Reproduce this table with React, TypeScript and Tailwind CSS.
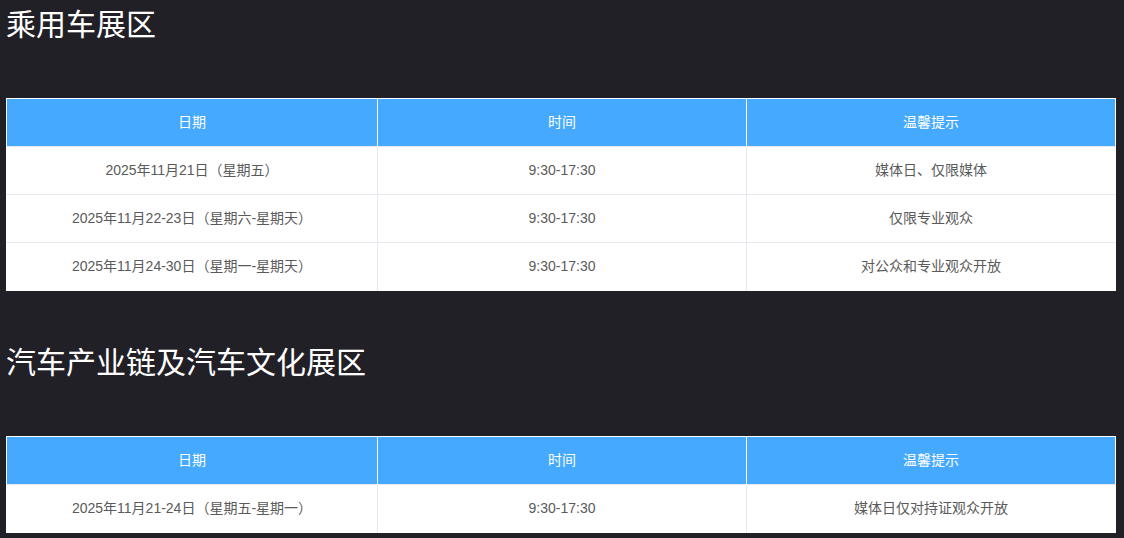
import React from "react";

type Row = [string, string, string];

const sections: { title: string; rows: Row[] }[] = [
  {
    title: "乘用车展区",
    rows: [
      ["2025年11月21日（星期五）", "9:30-17:30", "媒体日、仅限媒体"],
      ["2025年11月22-23日（星期六-星期天）", "9:30-17:30", "仅限专业观众"],
      ["2025年11月24-30日（星期一-星期天）", "9:30-17:30", "对公众和专业观众开放"],
    ],
  },
  {
    title: "汽车产业链及汽车文化展区",
    rows: [["2025年11月21-24日（星期五-星期一）", "9:30-17:30", "媒体日仅对持证观众开放"]],
  },
];

export default function App() {
  return (
    <div
      className="w-[1124px] h-[538px] overflow-hidden bg-[#222027] pl-[6px] pr-[8px] pt-[10px]"
      style={{ fontFamily: '"Liberation Sans", "Noto Sans CJK SC", sans-serif' }}
    >
      {sections.map((s, i) => (
        <div key={i} className={i > 0 ? "mt-[57px]" : ""}>
          <h2 className="text-[30px] leading-[30px] text-white font-normal">{s.title}</h2>
          <table className="mt-[58px] w-[1110px] table-fixed border-collapse border border-white bg-white text-[14px]">
            <colgroup>
              <col className="w-[371px]" />
              <col className="w-[369px]" />
              <col />
            </colgroup>
            <thead>
              <tr className="bg-[#45aaff] text-white">
                <th className="h-[48px] font-normal border-r border-white">日期</th>
                <th className="h-[48px] font-normal border-r border-white">时间</th>
                <th className="h-[48px] font-normal">温馨提示</th>
              </tr>
            </thead>
            <tbody>
              {s.rows.map((r, j) => (
                <tr key={j} className="text-[#5a5a5a] border-t border-[#e8e8f0]">
                  {r.map((c, k) => (
                    <td
                      key={k}
                      className={`h-[48px] text-center ${k < 2 ? "border-r border-[#e8e8f0]" : ""}`}
                    >
                      {c}
                    </td>
                  ))}
                </tr>
              ))}
            </tbody>
          </table>
        </div>
      ))}
    </div>
  );
}
